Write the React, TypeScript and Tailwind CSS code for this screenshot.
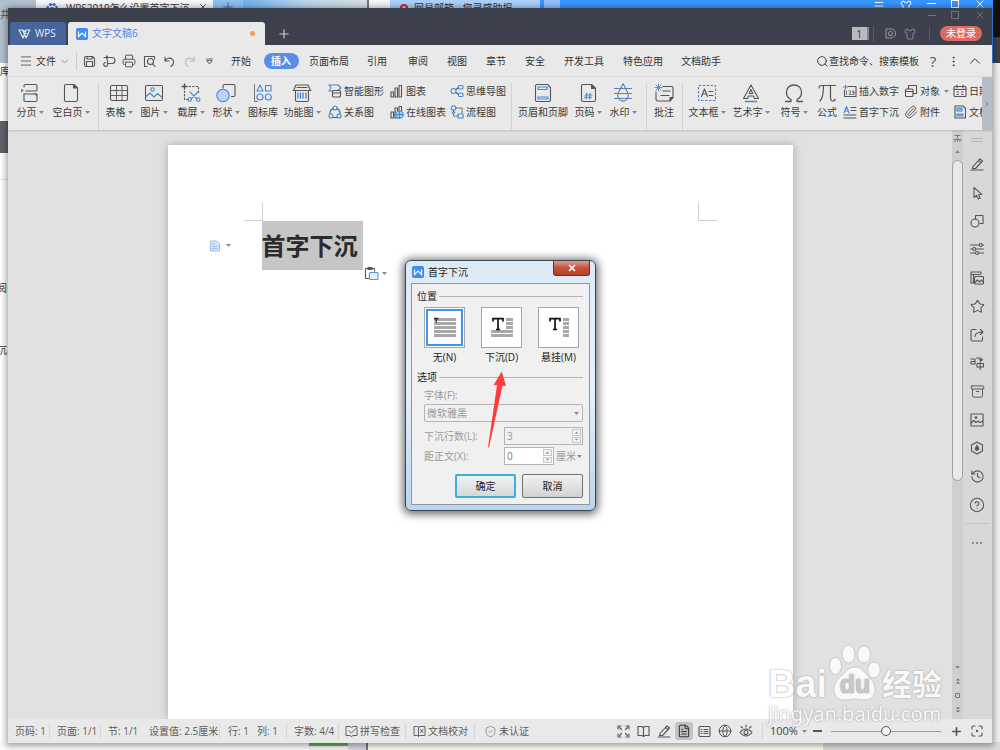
import type { ReactNode } from "react";
import {
  Archive, BookOpen, ChevronDown, ChevronRight, ChevronUp, CircleHelp, FileText, Globe,
  History, Menu, MoreHorizontal, MoreVertical, Paperclip,
  Plus, Printer, Search, Shirt, ShieldCheck, Star, X,
} from "lucide-react";

const INK = "#555555";
const BLUE = "#4489d6";

type SvgProps = { size?: number; children: ReactNode; className?: string };

function Svg({ size = 20, children, className = "" }: SvgProps) {
  return (
    <svg
      width={size} height={size} viewBox={`0 0 ${size} ${size}`} fill="none" stroke={INK}
      strokeWidth="1.1" strokeLinecap="round" strokeLinejoin="round" className={`shrink-0 ${className}`} aria-hidden="true"
    >
      {children}
    </svg>
  );
}

function Caret({ className = "" }: { className?: string }) {
  return (
    <svg width="5" height="3" viewBox="0 0 5 3" className={`shrink-0 ${className}`} aria-hidden="true">
      <path d="M0 0h5L2.500 3z" fill="#8a8a8a" />
    </svg>
  );
}

function PenIcon() {
  return (
    <Svg size={14}>
      <path d="M3 9.500L10 1.800l2.500 2.200L5.500 11.500H2.500zM8.500 3.500L11 5.700M1 13h12" />
    </Svg>
  );
}

/* ---------- ribbon icons ---------- */

const big = {
  pageBreak: (
    <Svg>
      <path d="M4 4V3a1.500 1.500 0 0 1 1.500-1.500h10A1.500 1.500 0 0 1 17 3v3.500A1.500 1.500 0 0 1 15.500 8H6" />
      <path d="M17 12v-1H4v1M4 10.500v6A1.500 1.500 0 0 0 5.500 18.500h10a1.500 1.500 0 0 0 1.500-1.500v-4l-2-2.500" />
      <path d="M1 5.500v4L4 7.500z" fill={BLUE} stroke="none" />
    </Svg>
  ),
  blank: (
    <Svg>
      <path d="M3.500 3A1.500 1.500 0 0 1 5 1.500h8L16.500 5v12a1.500 1.500 0 0 1-1.500 1.500H5A1.500 1.500 0 0 1 3.500 17z" />
      <path d="M12.500 1.500V5h4z" fill={INK} />
    </Svg>
  ),
  table: (
    <Svg>
      <rect x="1.500" y="2.500" width="17" height="15" rx="1.500" />
      <path d="M1.500 7.500h17M1.500 12.500h17M7.500 2.500v15M13 2.500v15" strokeWidth="0.9" />
    </Svg>
  ),
  picture: (
    <Svg>
      <rect x="1.500" y="2.500" width="17" height="15" rx="1.500" />
      <circle cx="8.500" cy="6.500" r="1.700" stroke={BLUE} />
      <path d="M2 13.500l4-3.500 4 4 3.500-3.500 4.500 4" stroke={BLUE} />
    </Svg>
  ),
  capture: (
    <Svg>
      <path d="M3.500 1v5M1 3.500h5" strokeWidth="1.4" />
      <path d="M8 3.500h9.500v6M3.500 8v8.500H7" strokeDasharray="1.500 2" />
      <g stroke={BLUE}>
        <path d="M9 9l7 7M17 9l-7 7" />
        <circle cx="8.700" cy="16.500" r="1.800" />
        <circle cx="17.200" cy="16.500" r="1.800" />
      </g>
    </Svg>
  ),
  shape: (
    <Svg>
      <path d="M7 5V3a1.500 1.500 0 0 1 1.500-1.500h9A1.500 1.500 0 0 1 19 3v9a1.500 1.500 0 0 1-1.500 1.500h-2" />
      <circle cx="7" cy="12.500" r="6.200" stroke={BLUE} fill="#b9d4f0" />
    </Svg>
  ),
  iconLib: (
    <Svg>
      <path d="M1.500 1.500v17h3" strokeWidth="0.8" />
      <g stroke={BLUE}>
        <path d="M7 2l3 6H4z" />
        <rect x="12.500" y="2.500" width="5.500" height="5.500" />
        <circle cx="7" cy="14" r="3" />
        <circle cx="15.300" cy="14" r="3" />
      </g>
    </Svg>
  ),
  func: (
    <Svg>
      <path d="M1.500 7.500L4 2h12l2.500 5.500M1 7.500h18M3.500 7.500v9.500a1.500 1.500 0 0 0 1.500 1.500h10a1.500 1.500 0 0 0 1.500-1.500V7.500M5 4.500h10" />
      <path d="M6 10v5M8.500 10v5M11 10v5M14 10v5" stroke={BLUE} strokeWidth="1.300" />
    </Svg>
  ),
  header: (
    <Svg>
      <path d="M2.500 3A1.500 1.500 0 0 1 4 1.500h10.500l3 3V17a1.500 1.500 0 0 1-1.500 1.500H4A1.500 1.500 0 0 1 2.500 17z" />
      <path d="M5 4h9v2.500H5zM5 14h10v2H5z" stroke={BLUE} />
    </Svg>
  ),
  pageNo: (
    <Svg>
      <path d="M3.500 3A1.500 1.500 0 0 1 5 1.500h8.500l4 4V17a1.500 1.500 0 0 1-1.500 1.500H5A1.500 1.500 0 0 1 3.500 17z" />
      <path d="M13.500 1.500v4h4z" fill={INK} />
      <path d="M8.700 10l-.7 6M12.200 10l-.7 6M7 12h7M6.500 14.300h7" stroke={BLUE} />
    </Svg>
  ),
  watermark: (
    <Svg>
      <path d="M10 1L5.500 9.500C3.500 13.500 5.500 18 10 18s6.500-4.500 4.500-8.500z" strokeWidth="0.9" />
      <path d="M1.500 5.500h17M1.500 10.500h17M1.500 15.500h17" stroke={BLUE} />
    </Svg>
  ),
  comment: (
    <Svg>
      <path d="M9 3.500h8.500A1.500 1.500 0 0 1 19 5v9.500L16 18H3.500A1.500 1.500 0 0 1 2 16.500V9M9 8h7M7 12.500h8" />
      <path d="M19 14.500h-3V18z" fill={INK} />
      <path d="M4.500 1v7M1 4.500h7M2 2l5 5M7 2L2 7" stroke={BLUE} strokeWidth="0.9" />
    </Svg>
  ),
  textBox: (
    <Svg>
      <rect x="1.500" y="2.500" width="17" height="15" stroke={BLUE} strokeDasharray="2.500 1.500" strokeLinecap="butt" />
      <path d="M4.500 13.500L7.500 6l3 7.500M5.500 11h4M12 8.500h4M12 12.500h4" />
    </Svg>
  ),
  wordArt: (
    <Svg>
      <path d="M2.500 15.500L10 2l7.500 13.500h-4l-1-2.500h-5l-1 2.500zM8.300 10.500h3.500L10 6.500z" />
      <path d="M4.500 18.500h11" stroke={BLUE} strokeWidth="1.500" />
    </Svg>
  ),
  omega: (
    <Svg>
      <path d="M1.500 18.500h5.500v-2C4 15 2.500 12.500 2.500 9.500 2.500 5 5.500 2 10 2s7.500 3 7.500 7.500c0 3-1.500 5.500-4.500 7v2h5.500" strokeWidth="1.300" />
    </Svg>
  ),
  pi: (
    <Svg>
      <path d="M2 5c0-1.800 1-2.500 2.500-2.500h14M6.500 2.500c0 8-1 13-3.500 15.500M13.500 2.500v12c0 3 1 3.500 2.500 3.500s2-1 2-2" strokeWidth="1.200" />
    </Svg>
  ),
};

const small = {
  smart: (
    <Svg size={14}>
      <path d="M1 1h9l3 3-3 2M1 1l2 3-2 3h3" stroke={BLUE} />
      <rect x="4.500" y="6.500" width="8" height="6.500" rx="1" />
      <path d="M4.500 9h8" />
    </Svg>
  ),
  relation: (
    <Svg size={14}>
      <path d="M5 3.500A5.500 5.500 0 0 0 2 9M9 3.500A5.500 5.500 0 0 1 12 9M5 12.500h4" />
      <g stroke={BLUE}>
        <circle cx="7" cy="3" r="2" />
        <circle cx="3" cy="11" r="2" />
        <circle cx="11" cy="11" r="2" />
      </g>
    </Svg>
  ),
  chart: (
    <Svg size={14}>
      <path d="M1 8h2.500v5H1zM5 4h2.500v9H5zM9 1.500h2.500V13H9z" />
    </Svg>
  ),
  onlineChart: (
    <Svg size={14}>
      <path d="M1 7h2.500v6H1zM5 3h2.500v10H5zM9 5V1.500h2.500V6" />
      <circle cx="9.500" cy="9.500" r="3.800" stroke={BLUE} fill="#a9caef" />
      <path d="M5.700 9.500h7.600M9.500 5.700v7.600" stroke={BLUE} />
    </Svg>
  ),
  mind: (
    <Svg size={14}>
      <path d="M6 5.500L8.500 3.500M6 8.500l2.500 2" />
      <g stroke={BLUE}>
        <circle cx="3.500" cy="7" r="2.500" />
        <rect x="8.500" y="1.500" width="4.500" height="3.500" rx="1" />
        <rect x="8.500" y="9" width="4.500" height="3.500" rx="1" />
      </g>
    </Svg>
  ),
  flow: (
    <Svg size={14}>
      <path d="M6 3h6v5M3.500 5v6H8" strokeDasharray="1.500 1.500" />
      <circle cx="3.500" cy="3" r="2.200" stroke={BLUE} />
      <path d="M8 9h5v4H8zM2 7l1.500 2L5 7" stroke={BLUE} />
    </Svg>
  ),
  number: (
    <Svg size={14}>
      <path d="M5 2.500h8v10H1.500V6" />
      <path d="M2.500 1v4M.5 3h4" stroke={BLUE} />
      <path d="M3.500 7v3.500M6 7h1.500v1.700L6 10.500h2M9.500 7H11v3.500H9.500M9.800 8.700H11" strokeWidth="0.8" />
    </Svg>
  ),
  dropCap: (
    <Svg size={14}>
      <path d="M1 8L3.500 1.500 6 8M2 6h3" stroke={BLUE} />
      <path d="M8 2.500h5M8 5.500h5M1 10h12M1 13h12" />
    </Svg>
  ),
  object: (
    <Svg size={14}>
      <path d="M4.500 5V1.500h8v8H9.500" />
      <rect x="1.500" y="5" width="7.500" height="7.500" rx="1" />
      <path d="M1.500 7.500H9" />
    </Svg>
  ),
  attach: <Paperclip size={14} strokeWidth={1.7} color={INK} className="shrink-0" />,
  date: (
    <Svg size={14}>
      <rect x="1" y="2.500" width="12" height="10" rx="1" />
      <path d="M4 1v3M10 1v3M1 5.500h12M4 8h1.500M8.500 8H10M4 10.500h1.500M8.500 10.500H10" />
    </Svg>
  ),
  docPart: (
    <Svg size={14}>
      <path d="M2 1h8l2.500 2.500V13H2z" />
      <path d="M4 3h5v3H4zM4 9h6v2H4z" stroke={BLUE} fill="#8db9ea" />
    </Svg>
  ),
};

function Tool({ icon, label, width, menu = false }: { icon: ReactNode; label: string; width: string; menu?: boolean }) {
  return (
    <button type="button" className={`flex shrink-0 flex-col items-center gap-[3px] ${width}`}>
      {icon}
      <span className="flex items-center gap-[2px] leading-3 whitespace-nowrap">
        {label}
        {menu && <Caret />}
      </span>
    </button>
  );
}

function SmallTool({ icon, label, menu = false }: { icon: ReactNode; label: string; menu?: boolean }) {
  return (
    <button type="button" className="flex h-4 items-center gap-[2px] whitespace-nowrap">
      {icon}
      <span>{label}</span>
      {menu && <Caret className="ml-[2px]" />}
    </button>
  );
}

function Divider({ width }: { width: string }) {
  return (
    <div className={`flex h-12 shrink-0 justify-center ${width}`}>
      <div className="w-px bg-[#d2d2d2]" />
    </div>
  );
}

const COL = "flex shrink-0 flex-col gap-[5px]";

function Ribbon() {
  return (
    <div className="relative z-10 flex h-[54px] shrink-0 border-t border-[#dcdcdc] bg-[#e9e9e9] pl-[2px] text-[10px] text-[#3b3b3b] shadow-[0_1px_2px_rgba(0,0,0,0.15)]">
      <div className="flex min-w-0 flex-1 overflow-hidden pt-[6px]">
        <Tool icon={big.pageBreak} label="分页" width="w-10" menu />
        <Tool icon={big.blank} label="空白页" width="w-[42px]" menu />
        <Divider width="w-3" />
        <Tool icon={big.table} label="表格" width="w-[30px]" menu />
        <Tool icon={big.picture} label="图片" width="w-10" menu />
        <Tool icon={big.capture} label="截屏" width="w-[34px]" menu />
        <Tool icon={big.shape} label="形状" width="w-9" menu />
        <Tool icon={big.iconLib} label="图标库" width="w-[38px]" />
        <Tool icon={big.func} label="功能图" width="w-10" menu />
        <div className={`${COL} w-[68px] pl-[6px]`}>
          <SmallTool icon={small.smart} label="智能图形" />
          <SmallTool icon={small.relation} label="关系图" />
        </div>
        <div className={`${COL} w-[60px]`}>
          <SmallTool icon={small.chart} label="图表" />
          <SmallTool icon={small.onlineChart} label="在线图表" />
        </div>
        <div className={`${COL} w-14`}>
          <SmallTool icon={small.mind} label="思维导图" />
          <SmallTool icon={small.flow} label="流程图" />
        </div>
        <Divider width="w-[10px]" />
        <Tool icon={big.header} label="页眉和页脚" width="w-[54px]" />
        <Tool icon={big.pageNo} label="页码" width="w-9" menu />
        <Tool icon={big.watermark} label="水印" width="w-[34px]" menu />
        <Divider width="w-3" />
        <Tool icon={big.comment} label="批注" width="w-6" />
        <Divider width="w-3" />
        <Tool icon={big.textBox} label="文本框" width="w-[38px]" menu />
        <Tool icon={big.wordArt} label="艺术字" width="w-[50px]" menu />
        <Tool icon={big.omega} label="符号" width="w-9" menu />
        <Tool icon={big.pi} label="公式" width="w-[30px]" />
        <div className={`${COL} w-[62px] pl-px`}>
          <SmallTool icon={small.number} label="插入数字" />
          <SmallTool icon={small.dropCap} label="首字下沉" />
        </div>
        <div className={`${COL} w-[49px]`}>
          <SmallTool icon={small.object} label="对象" menu />
          <SmallTool icon={small.attach} label="附件" />
        </div>
        <div className={`${COL} min-w-0 flex-1`}>
          <SmallTool icon={small.date} label="日期" />
          <SmallTool icon={small.docPart} label="文档部件" />
        </div>
      </div>
      <button type="button" aria-label="更多" className="flex w-[10px] shrink-0 items-center justify-center bg-[#b7bcc6]">
        <ChevronRight size={8} color="#555" />
      </button>
    </div>
  );
}

/* ---------- title bar and menu ---------- */

function WpsMark() {
  return (
    <svg width="13" height="10" viewBox="0 0 13 10" fill="none" stroke="#e4e9f2" strokeWidth="1.200" strokeLinejoin="round" aria-hidden="true">
      <path d="M.7 1h4L8 9 11.800 1H8L5 9 1 1M5.500 1L8.500 5" />
    </svg>
  );
}

function WriterIcon({ size }: { size: number }) {
  return (
    <svg width={size} height={size} viewBox="0 0 12 12" className="shrink-0" aria-hidden="true">
      <rect width="12" height="12" rx="1.800" fill="#3f8cf5" />
      <path d="M2.500 3.500v5L6 5l3.500 3.500v-5" fill="none" stroke="#ffffff" strokeWidth="1.200" />
    </svg>
  );
}

function TitleBar() {
  return (
    <header className="flex h-[37px] shrink-0 bg-[#3d414e] pl-[2px]">
      <div className="flex items-end gap-[2px]">
        <button type="button" className="flex h-[23px] w-14 items-center gap-1 rounded-t-[3px] bg-[#46659b] pl-2 text-[10px] text-[#e4e9f2]">
          <WpsMark />
          <span>WPS</span>
        </button>
        <div className="flex h-[23px] w-[197px] items-center gap-1 rounded-t-[3px] bg-[#e9e9e9] pr-[10px] pl-2 text-[10px] text-[#4a86e0]">
          <WriterIcon size={12} />
          <span className="flex-1">文字文稿6</span>
          <span className="h-[5px] w-[5px] rounded-full bg-[#f0a050]" />
        </div>
        <button type="button" aria-label="新建" className="ml-[10px] flex h-[23px] items-center">
          <Plus size={14} color="#c9cbd0" />
        </button>
      </div>
      <div className="ml-auto flex flex-col items-end pr-[10px]">
        <div className="flex h-[14px] items-center gap-[15px] text-[#70747f]">
          <button type="button" aria-label="最小化" className="h-px w-2 bg-[#70747f]" />
          <button type="button" aria-label="最大化" className="h-2 w-2 border border-[#70747f]" />
          <button type="button" aria-label="关闭" className="-mr-1"><X size={12} strokeWidth={1.8} /></button>
        </div>
        <div className="flex h-[23px] items-center">
          <button type="button" className="flex h-[13px] w-[17px] items-center border-r-2 border-[#84878f] bg-[#b9babd] pl-1 text-[11px] leading-3 text-[#3d414e]">1</button>
          <span className="ml-1 h-4 w-px bg-[#565a66]" />
          <button type="button" aria-label="稻壳" className="ml-[11px]">
            <Svg size={11}>
              <path d="M1 1h5a4.500 4.500 0 0 1 0 9H1z" stroke="#8a8e98" />
              <circle cx="5.500" cy="5.500" r="2" stroke="#8a8e98" />
            </Svg>
          </button>
          <button type="button" aria-label="皮肤" className="ml-2"><Shirt size={12} strokeWidth={1.8} color="#8a8e98" /></button>
          <span className="ml-[13px] h-[14px] w-px bg-[#565a66]" />
          <button type="button" className="ml-[10px] h-[15px] w-[42px] rounded-full bg-[#dc6a60] text-[10px] leading-[15px] text-white">未登录</button>
        </div>
      </div>
    </header>
  );
}

const tabs = [
  { label: "开始", width: "w-[38px]" },
  { label: "插入", width: "w-[42px]", active: true },
  { label: "页面布局", width: "w-[54px]" },
  { label: "引用", width: "w-[42px]" },
  { label: "审阅", width: "w-10" },
  { label: "视图", width: "w-[38px]" },
  { label: "章节", width: "w-10" },
  { label: "安全", width: "w-[38px]" },
  { label: "开发工具", width: "w-[60px]" },
  { label: "特色应用", width: "w-[58px]" },
  { label: "文档助手", width: "w-[58px]" },
];

const quick = [
  {
    name: "保存",
    icon: <Svg size={13}><path d="M1.500 3A1.500 1.500 0 0 1 3 1.500h6.500l2 2V10a1.500 1.500 0 0 1-1.500 1.500H3A1.500 1.500 0 0 1 1.500 10zM4 1.500v2.500h5V1.500M3.500 11.500v-5h6v5" /></Svg>,
  },
  {
    name: "输出为PDF",
    icon: <Svg size={13}><path d="M1 2.500h8a3 3 0 0 1 0 6H5.500M5 2.500L3.500 1M5 2.500L3.500 4M4.500 5v3.500a2 2 0 1 1-2-1" /></Svg>,
  },
  { name: "打印", icon: <Printer size={14} strokeWidth={1.7} color={INK} /> },
  {
    name: "打印预览",
    icon: <Svg size={13}><path d="M4 11.500H1.500v-10h10V4" /><circle cx="7.500" cy="6.500" r="3" /><path d="M9.700 8.800l2.300 2.700" /></Svg>,
  },
  { name: "撤销", icon: <Svg size={13}><path d="M2 2v4h4M2 6c2-3 5-3.500 7-2s2.500 5-1 7.500" /></Svg> },
  { name: "恢复", icon: <Svg size={13} className="opacity-30"><path d="M11 2v4H7M11 6C9 3 6 2.500 4 4s-2.500 5 1 7.500" /></Svg> },
  { name: "自定义", icon: <Svg size={7}><path d="M.5 1h6M1 3l2.500 3L6 3z" strokeWidth="0.9" /></Svg> },
];

function MenuBar() {
  return (
    <div className="flex h-[31px] shrink-0 items-center bg-[#e9e9e9] pt-px text-[10px] text-[#333]">
      <button type="button" className="flex w-[68px] items-center gap-[3px] pr-[6px] pl-[11px]">
        <Menu size={14} strokeWidth={1.5} color={INK} />
        <span className="flex-1 text-left whitespace-nowrap">文件</span>
        <ChevronDown size={11} strokeWidth={1.6} color="#777" className="shrink-0" />
      </button>
      <span className="h-[18px] border-l border-[#cdcdcd]" />
      <div className="ml-[2px] flex">
        {quick.map((q) => (
          <button key={q.name} type="button" aria-label={q.name} className="flex h-5 w-5 items-center justify-center">{q.icon}</button>
        ))}
      </div>
      <nav className="ml-[3px] flex">
        {tabs.map((t) => (
          <button key={t.label} type="button" className={`flex shrink-0 items-center justify-center whitespace-nowrap ${t.width}`}>
            {t.active ? <span className="h-4 w-[35px] rounded-full bg-[#5b8de8] leading-4 font-bold text-white">{t.label}</span> : t.label}
          </button>
        ))}
      </nav>
      <div className="ml-auto flex items-center">
        <button type="button" className="flex items-center whitespace-nowrap">
          <Search size={13} strokeWidth={1.7} />
          <span>查找命令、搜索模板</span>
        </button>
        <button type="button" aria-label="帮助" className="ml-2 w-3 text-[15px] leading-5 text-[#555]">?</button>
        <button type="button" aria-label="更多" className="ml-2"><MoreVertical size={13} strokeWidth={1.5} /></button>
        <button type="button" aria-label="收起" className="mr-2 ml-[6px]"><ChevronUp size={18} strokeWidth={1.3} /></button>
      </div>
    </div>
  );
}

/* ---------- document ---------- */

function DocumentPage() {
  return (
    <div className="mt-[15px] w-[625px] bg-white pt-[58px] shadow-[0_0_9px_rgba(0,0,0,0.25)]">
      <div className="flex justify-between px-[76px]">
        <span className="h-[18px] w-[19px] border-r border-b border-[#cfcfcf]" />
        <span className="h-[18px] w-[19px] border-b border-l border-[#cfcfcf]" />
      </div>
      <div className="flex items-center pl-[41px]">
        <button type="button" aria-label="段落布局" className="flex w-[53px] items-center gap-[5px]">
          <svg width="12" height="12" viewBox="0 0 12 12" aria-hidden="true">
            <path d="M1.500 1h6L10.500 4v7h-9z" fill="#dbe7f7" stroke="#9dbce6" />
            <path d="M3 4h3M3 6.500h6M3 8.500h6" stroke="#9dbce6" />
          </svg>
          <Caret />
        </button>
        <div className="relative h-[49px] w-[101px] bg-[#c6c6c6]">
          <h1 className="text-2xl leading-[50px] font-bold whitespace-nowrap text-[#2b2b2b]">首字下沉</h1>
          <button type="button" aria-label="粘贴选项" className="absolute top-[45px] left-[102px] flex items-center gap-[3px]">
            <Svg size={15}>
              <path d="M5 12.500H1.500V2.500h9V5M4 1.500h4v2H4z" />
              <rect x="5.500" y="6.500" width="8.500" height="7" rx="1" stroke="#5b93e2" fill="#e6f0fd" />
            </Svg>
            <Caret />
          </button>
        </div>
      </div>
    </div>
  );
}

const side = [
  { name: "编辑", icon: <PenIcon /> },
  { name: "选择", icon: <Svg size={14}><path d="M4 1.500v10l2.500-2.200L8.300 13l1.900-.9L8.500 8.700l3.300-.4z" /></Svg> },
  { name: "形状", icon: <Svg size={14}><path d="M5.500 5V1.500h7.500v8H10" /><circle cx="5" cy="9" r="4" /></Svg> },
  {
    name: "属性",
    icon: <Svg size={14}><path d="M.5 3H9M12.500 3h1M.5 7h2M6 7h7.500M.5 11H5M9 11h4.500" /><circle cx="10.700" cy="3" r="1.500" /><circle cx="4.200" cy="7" r="1.500" /><circle cx="7" cy="11" r="1.500" /></Svg>,
  },
  {
    name: "素材",
    icon: <Svg size={14}><path d="M3 12H1V1h10v2M1 3.500h9M3.500 4v8" /><rect x="4.500" y="5.500" width="9" height="7.500" rx="1" /><path d="M5 11.500l2.500-2.500 2 2L11.500 9l1.500 2" /></Svg>,
  },
  { name: "收藏", icon: <Star size={15} strokeWidth={1.7} /> },
  {
    name: "分享",
    icon: <Svg size={14}><path d="M6 1.500H2.500A1.500 1.500 0 0 0 1 3v8.500A1.500 1.500 0 0 0 2.500 13h8.500a1.500 1.500 0 0 0 1.500-1.500V9M5 8.500C5 5.500 8 4 13 4M10.500 1.500L13 4l-2.500 2.500" /></Svg>,
  },
  {
    name: "翻译",
    icon: <Svg size={14}><path d="M1 3h4v5H1V5.500h4M6.500 2H11v3M9.500 3.500L11 5l1.500-1.500M7 7.500h6.500V11H7zM10.200 6v7.500" /></Svg>,
  },
  { name: "归档", icon: <Archive size={15} strokeWidth={1.5} /> },
  {
    name: "图片",
    icon: <Svg size={14}><rect x="1" y="1" width="12" height="12" /><path d="M1 10l3-2.500L6 9.500 8 8l2 1.500L13 8" /><circle cx="6" cy="4.500" r=".8" fill={INK} /></Svg>,
  },
  {
    name: "安全",
    icon: <Svg size={14}><path d="M7 1l5.500 3v6L7 13l-5.500-3V4z" /><path d="M7 4c.8 1.300 2 2.300 2 3.600S8.200 9.700 7 9.700 5 8.900 5 7.600 6.500 5.500 7 4z" fill={INK} strokeWidth="0.5" /></Svg>,
  },
  { name: "历史", icon: <History size={15} strokeWidth={1.7} /> },
  { name: "帮助", icon: <CircleHelp size={16} strokeWidth={1.6} /> },
];

function Workspace() {
  return (
    <main className="flex min-h-0 flex-1">
      <section className="flex min-w-0 flex-1 justify-center overflow-hidden bg-[#e1e1e1]">
        <DocumentPage />
      </section>
      <div className="flex w-[11px] flex-col items-center bg-[#cfcfcf]">
        <Svg size={9} className="mt-1"><path d="M2 1.500h5M4.500 1v3M1 5.500h7M2 7.500v-1M4.500 7.500v-1M7 7.500v-1" stroke="#777" /></Svg>
        <span className="mt-[7px] mb-[7px] rotate-180"><Caret className="block" /></span>
        <div className="h-[321px] w-full rounded-full border border-[#a0a0a0] bg-[#e9e9e9]" />
        <div className="mt-auto mb-[6px] flex flex-col items-center gap-[9px]">
          <Caret />
          <Svg size={6}><path d="M1 2.500h4L3 .5zM1 5.500h4L3 3.500z" fill="#666" stroke="none" /></Svg>
          <span className="h-[5px] w-[5px] rounded-[1px] border border-[#777]" />
          <Svg size={6}><path d="M1 .5h4L3 2.500zM1 3.500h4L3 5.500z" fill="#666" stroke="none" /></Svg>
        </div>
      </div>
      <aside className="flex w-[29px] flex-col items-center bg-[#d8d8d8] pr-px text-[#555]">
        <span className="mt-[8px] h-1 w-3 border-y border-[#b5b5b5]" />
        <div className="mt-2 flex h-[369px] flex-col">
          {side.map((s) => (
            <button key={s.name} type="button" aria-label={s.name} className="flex flex-1 items-center justify-center">{s.icon}</button>
          ))}
        </div>
        <span className="mt-1 w-6 border-t border-[#c5c5c5]" />
        <button type="button" aria-label="更多" className="mt-3"><MoreHorizontal size={14} color="#888" /></button>
      </aside>
    </main>
  );
}

/* ---------- status bar ---------- */

const SEP = "border-l border-[#d6d6d6]";

const views = [
  { name: "全屏", icon: <Svg size={13}><path d="M1 4V1h3M9 1h3v3M12 9v3H9M4 12H1V9M8.500 4.500l2-2M2.500 10.500l2-2M2.500 2.500l2 2M8.500 8.500l2 2" /></Svg> },
  { name: "阅读", icon: <Svg size={13}><path d="M6.500 2.500L5 1.500H1v9h4l1.500 1 1.500-1h4v-9H8zM6.500 2.500v9" /></Svg> },
  { name: "写作", icon: <PenIcon /> },
  { name: "页面视图", icon: <FileText size={14} strokeWidth={1.8} color="#333" />, on: true },
  { name: "大纲", icon: <Svg size={13}><rect x="1" y="1.500" width="11" height="10" rx="1" /><path d="M3 4.500h1M3 6.500h1M3 8.500h1M6 4.500h4M6 6.500h4M6 8.500h4" /></Svg> },
  { name: "网页", icon: <Globe size={14} strokeWidth={1.7} /> },
  { name: "护眼", icon: <Svg size={14}><path d="M1 8.500C3 6 5 5 7 5s4 1 6 3.500C11 11 9 12 7 12s-4-1-6-3.500zM7 3V1M3.500 4L2 2.500M10.500 4L12 2.500" /><circle cx="7" cy="8.500" r="2" /></Svg> },
];

function StatusBar() {
  return (
    <footer className="flex h-6 shrink-0 items-center bg-[#e9e9e9] text-[10px] whitespace-nowrap text-[#5c5c5c]">
      <span className="w-[41px] pl-[7px]">页码: 1</span>
      <span className={`w-[51px] pl-[7px] ${SEP}`}>页面: 1/1</span>
      <span className={`w-[49px] pl-[7px] ${SEP}`}>节: 1/1</span>
      <span className="w-[70px]">设置值: 2.5厘米</span>
      <span className={`w-[38px] pl-2 ${SEP}`}>行: 1</span>
      <span className="w-[29px]">列: 1</span>
      <span className={`w-[52px] pl-[7px] ${SEP}`}>字数: 4/4</span>
      <button type="button" className={`flex w-[67px] items-center gap-[2px] pl-[6px] ${SEP}`}>
        <Svg size={13}><path d="M6.500 11.500L5 10.500H1v-9h4l1.500 1 1.500-1h4v9H8zM4 6l2.500 2L11 3.500" strokeWidth="0.9" /></Svg>
        拼写检查
      </button>
      <button type="button" className={`flex w-[69px] items-center gap-[2px] pl-[7px] ${SEP}`}>
        <Svg size={13}><path d="M5.500 2.500L4.500 1.500H1v9h3.500l1 1 1-1H12v-9H6.500zM5.500 2.500v9M7.500 4.500l2.500 3M10 4.500l-2.500 3" strokeWidth="0.9" /></Svg>
        文档校对
      </button>
      <button type="button" className={`flex items-center gap-[2px] pl-[9px] ${SEP}`}>
        <ShieldCheck size={13} strokeWidth={1.5} color="#888" />
        未认证
      </button>
      <div className="ml-auto flex items-center">
        <div className="flex w-[143px] text-[#555]">
          {views.map((v) => (
            <button key={v.name} type="button" aria-label={v.name} className="flex flex-1 items-center justify-center">
              <span className={v.on ? "flex h-[18px] w-[18px] items-center justify-center rounded-[3px] bg-[#c2c2c2]" : "flex h-[18px] w-[18px] items-center justify-center"}>{v.icon}</span>
            </button>
          ))}
        </div>
        <button type="button" className={`ml-[6px] flex w-[51px] items-center gap-1 pl-[7px] text-[11px] text-[#444] ${SEP}`}>
          100%
          <Caret />
        </button>
        <button type="button" aria-label="缩小" className="h-[2px] w-[9px] bg-[#555]" />
        <input
          type="range" aria-label="显示比例" defaultValue={50}
          className="mx-[9px] h-px w-[110px] appearance-none bg-[#999] [&::-webkit-slider-thumb]:h-[10px] [&::-webkit-slider-thumb]:w-[10px] [&::-webkit-slider-thumb]:appearance-none [&::-webkit-slider-thumb]:rounded-full [&::-webkit-slider-thumb]:border [&::-webkit-slider-thumb]:border-[#555] [&::-webkit-slider-thumb]:bg-[#f4f4f4]"
        />
        <button type="button" aria-label="放大" className="mr-2"><Plus size={13} strokeWidth={3} color="#555" /></button>
        <button type="button" aria-label="适合窗口" className="mr-[9px]">
          <Svg size={12}><path d="M1 4V2a1 1 0 0 1 1-1h2M8 1h2a1 1 0 0 1 1 1v2M11 8v2a1 1 0 0 1-1 1H8M4 11H2a1 1 0 0 1-1-1V8" /><circle cx="6" cy="6" r=".6" fill={INK} /></Svg>
        </button>
      </div>
    </footer>
  );
}

/* ---------- dialog ---------- */

type Kind = "none" | "drop" | "hang";

function DropPreview({ kind }: { kind: Kind }) {
  return (
    <svg width="24" height="24" viewBox="0 0 24 24" className="shrink-0" aria-hidden="true">
      {kind === "none" && (
        <>
          <path d="M1 3.500h22M1 7.500h22M1 11.500h22M1 15.500h22M1 19.500h22" stroke="#a8a8a8" strokeWidth="3" />
          <path d="M1 2.500h4.500M3.200 2.500v4" stroke="#222" strokeWidth="1.300" />
        </>
      )}
      {kind === "drop" && <path d="M16 3.500h7M16 7.500h7M16 11.500h7M1 15.500h22M1 19.500h22" stroke="#a8a8a8" strokeWidth="3" />}
      {kind === "hang" && <path d="M16 3.500h6M16 7.500h6M16 11.500h6M16 15.500h6M16 19.500h6" stroke="#a8a8a8" strokeWidth="3" />}
      {kind !== "none" && <path d="M3 5.500V2.700h10v2.800M8 3v10.500M6 13.500h4" stroke="#111" strokeWidth="1.700" fill="none" />}
    </svg>
  );
}

function PositionOption({ kind, label, checked = false }: { kind: Kind; label: string; checked?: boolean }) {
  return (
    <label className="flex w-[57px] shrink-0 flex-col items-center gap-[2px]">
      <input type="radio" name="position" defaultChecked={checked} className="peer sr-only" />
      <span className="flex h-[41px] w-[41px] border border-[#a3a6ad] bg-white p-px peer-checked:[&>span]:border-[#4094f0]">
        <span className="flex flex-1 items-center justify-center border-2 border-transparent">
          <DropPreview kind={kind} />
        </span>
      </span>
      <span className="leading-[14px] whitespace-nowrap">{label}</span>
    </label>
  );
}

function Spinner() {
  return (
    <span className="flex w-[11px] flex-col gap-px p-px">
      <span className="flex flex-1 items-center justify-center border border-[#c8c8c8] bg-[#f3f3f3]"><Caret className="rotate-180 scale-75" /></span>
      <span className="flex flex-1 items-center justify-center border border-[#c8c8c8] bg-[#f3f3f3]"><Caret className="scale-75" /></span>
    </span>
  );
}

function GroupTitle({ children }: { children: ReactNode }) {
  return (
    <div className="flex h-[14px] items-center gap-[2px] leading-[14px]">
      <span>{children}</span>
      <span className="flex-1 border-t border-[#b4b4b4]" />
    </div>
  );
}

function Dialog() {
  return (
    <div
      role="dialog" aria-label="首字下沉"
      className="absolute top-[260px] left-[405px] z-20 w-[191px] rounded-[6px] border border-[#3c4650] bg-linear-to-b from-[#dce9f7] via-[#e6f1fc] to-[#b9d5ee] px-[5px] pb-[5px] text-[10px] text-[#222] shadow-[0_1px_9px_2px_rgba(0,0,0,0.6)]"
    >
      <div className="flex h-[22px] items-center pl-px">
        <WriterIcon size={12} />
        <span className="ml-1 flex-1">首字下沉</span>
        <button type="button" aria-label="关闭" className="flex h-[15px] w-[37px] items-center justify-center self-start rounded-b-[3px] border border-t-0 border-[#7a2a22] bg-linear-to-b from-[#dc9a8c] via-[#c4503c] to-[#b8402a]">
          <X size={10} strokeWidth={4} color="#ffffff" />
        </button>
      </div>
      <div className="border border-[#8e98a3] bg-[#f0f0f0] px-[6px] pt-[5px] pb-[6px]">
        <div className="-ml-px"><GroupTitle>位置</GroupTitle></div>
        <div className="relative mt-1 -ml-[2px] flex">
          <PositionOption kind="none" label="无(N)" checked />
          <PositionOption kind="drop" label="下沉(D)" />
          <PositionOption kind="hang" label="悬挂(M)" />
        </div>
        <div className="mt-[6px] -ml-px"><GroupTitle>选项</GroupTitle></div>
        <div className="pl-[6px] text-[#9a9a9a]">
          <label htmlFor="font" className="mt-1 block leading-[14px]">字体(F):</label>
          <div className="relative mt-[2px]">
            <select id="font" disabled className="block h-[18px] w-full appearance-none rounded-[2px] border border-[#b4b4b4] bg-[#f0f0f0] pl-[2px] leading-4">
              <option>微软雅黑</option>
            </select>
            <Caret className="pointer-events-none absolute top-[8px] right-1" />
          </div>
          <div className="mt-[5px] flex items-center justify-between">
            <label htmlFor="lines">下沉行数(L):</label>
            <span className="flex h-[18px] w-[79px] border border-[#b4b4b4]">
              <input id="lines" disabled defaultValue="3" className="min-w-0 flex-1 pl-[2px]" />
              <Spinner />
            </span>
          </div>
          <div className="mt-[2px] flex items-center">
            <label htmlFor="distance" className="flex-1">距正文(X):</label>
            <span className="flex h-[18px] w-[50px] border border-[#b4b4b4] bg-white">
              <input id="distance" defaultValue="0" className="min-w-0 flex-1 pl-[2px] text-[#777]" />
              <Spinner />
            </span>
            <button type="button" className="flex w-[29px] items-center gap-px pl-[2px] whitespace-nowrap">厘米<Caret /></button>
          </div>
        </div>
        <div className="mt-[9px] flex justify-end gap-[6px]">
          <button type="button" className="h-6 w-[61px] rounded-[2px] border-2 border-[#3cb0dc] bg-linear-to-b from-[#f2f2f2] to-[#d4d8da]">确定</button>
          <button type="button" className="h-6 w-[61px] rounded-[2px] border border-[#707070] bg-linear-to-b from-[#f2f2f2] to-[#d2d2d2]">取消</button>
        </div>
      </div>
      <svg width="20" height="80" viewBox="0 0 20 80" className="pointer-events-none absolute top-[109px] left-[81px]" aria-hidden="true">
        <path d="M14.700 1.500L19 16l-3.500-.5L2 77.500 1 77.300 10 15l-3.500.3z" fill="#ff3b3b" />
      </svg>
    </div>
  );
}

/* ---------- desktop behind the window ---------- */

function Backdrop() {
  return (
    <div aria-hidden="true" className="absolute inset-0 flex flex-col justify-between overflow-hidden bg-[#f4f4f4] text-[10px] leading-[28px] text-[#333]">
      <div className="flex h-[63px] bg-[#3896ff]">
        <div className="w-9 bg-[#b4c2cf] text-[#555]">
          <span className="leading-4">井</span>
          <X size={9} className="-mt-5 ml-5" />
        </div>
        <div className="flex w-[177px] gap-2 overflow-hidden bg-[#f5f7f9] pl-[10px] whitespace-nowrap">
          <svg width="12" height="12" viewBox="0 0 12 12" className="mt-[2px] shrink-0">
            <path d="M6 5c3 0 5 6 2 6H4C1 11 3 5 6 5z" fill="#2a70e0" />
            <circle cx="4.500" cy="2.500" r="1.600" fill="#2a70e0" /><circle cx="8" cy="2.500" r="1.600" fill="#2a70e0" />
            <circle cx="1.700" cy="5" r="1.300" fill="#2a70e0" /><circle cx="10.500" cy="5" r="1.300" fill="#2a70e0" />
          </svg>
          <span className="leading-4">WPS2019怎么设置首字下沉</span>
          <X size={10} className="mt-[2px]" />
        </div>
        <div className="w-[30px] bg-[#8fc0f2] pl-2"><Plus size={14} color="#4a6f96" /></div>
        <div className="w-[124px] bg-linear-to-r from-[#6fb1f3] via-[#b9d6ea] to-[#d8dfe4]" />
        <div className="w-[23px] border-l-2 border-[#777] bg-[#f3f6fa]" />
        <div className="flex w-[150px] gap-[6px] overflow-hidden bg-[#abd0fa] pl-[10px] leading-4 whitespace-nowrap">
          <span className="mt-1 h-2 w-2 rounded-full border-2 border-[#e01f2f]" />
          网易邮箱 - 您灵感助报
        </div>
        <div className="ml-1 h-[8px] w-4 bg-[#8fc2fa]" />
        <div className="mr-[7px] ml-auto flex gap-[15px] text-white">
          <Menu size={12} /><Shirt size={12} /><span className="mt-[3px] h-px w-[9px] bg-white" />
          <span className="h-2 w-2 border border-white" /><X size={12} className="-mt-[2px]" />
        </div>
        <div className="w-[7px] bg-[#111]"><div className="mt-[37px] h-[38px] bg-[#3d404c]" /></div>
      </div>
      <div className="flex flex-1 justify-between">
        <div className="flex w-2 flex-col overflow-hidden bg-white">
          <span className="block h-[58px] leading-4">库</span>
          <span className="block h-8 shrink-0 bg-[#62646b]" />
          <span className="mt-[26px] border-t border-[#e3e3e3]" />
          <span className="mt-[98px] -ml-[3px] leading-5">阅</span>
          <span className="mt-[42px] -ml-[3px] leading-5">沉</span>
        </div>
        <div className="w-[7px] bg-[#f0f0f2]" />
      </div>
      <div className="flex h-2">
        <div className="w-[309px] bg-[#fafafa]" />
        <div className="h-1 w-[39px] bg-[#5cb84c]" />
        <div className="w-[20px] border-r-2 border-[#777] bg-[#d5dade]" />
        <div className="w-[455px] bg-[#fbfbee]" />
        <div className="flex-1 bg-[#dcdcdc]" />
      </div>
    </div>
  );
}

/* ---------- watermark ---------- */

function Watermark() {
  return (
    <div className="pointer-events-none absolute right-[54px] bottom-[24px] z-30 w-[178px] opacity-80">
      <div className="flex items-end font-bold text-white [text-shadow:0_0_2px_#999,0_0_1px_#999]">
        <span className="w-[61px] font-['Liberation_Sans',sans-serif] text-[38px] leading-9">Bai</span>
        <span className="relative flex h-[58px] w-[52px] items-end justify-center">
          <svg width="52" height="58" viewBox="0 0 52 58" className="absolute inset-0" aria-hidden="true">
            <g fill="#ffffff" stroke="#c4c4c4">
              <ellipse cx="6.500" cy="22" rx="6" ry="8.500" />
              <ellipse cx="19.500" cy="10" rx="6.500" ry="9" />
              <ellipse cx="35" cy="10.500" rx="6.500" ry="8.500" />
              <ellipse cx="45" cy="26" rx="6.300" ry="8" />
              <path d="M26 23c7 0 10 6 15 11 8 8 7 22-5 22-4 0-6-1-10-1s-6 1-10 1C3 56 2 42 10 34c6-5 9-11 16-11z" />
            </g>
          </svg>
          <span className="relative font-['Liberation_Sans',sans-serif] text-[25px] leading-9 text-[#c2c2c2]">du</span>
        </span>
        <span className="ml-px text-[30px] leading-9">经验</span>
      </div>
      <div className="font-['Noto_Sans',sans-serif] text-[20px] leading-6 whitespace-nowrap text-white [text-shadow:0_0_2px_#999,0_0_1px_#999]">jingyan.baidu.com</div>
    </div>
  );
}

export default function App() {
  return (
    <div className="relative h-screen min-h-[600px] overflow-hidden px-2 pt-2 pb-[7px] font-['Open_Sans','Noto_Sans_CJK_SC',sans-serif]">
      <Backdrop />
      <div className="relative flex h-full flex-col shadow-[0_1px_6px_2px_rgba(0,0,0,0.35)]">
        <TitleBar />
        <MenuBar />
        <Ribbon />
        <Workspace />
        <StatusBar />
      </div>
      <Dialog />
      <Watermark />
    </div>
  );
}
